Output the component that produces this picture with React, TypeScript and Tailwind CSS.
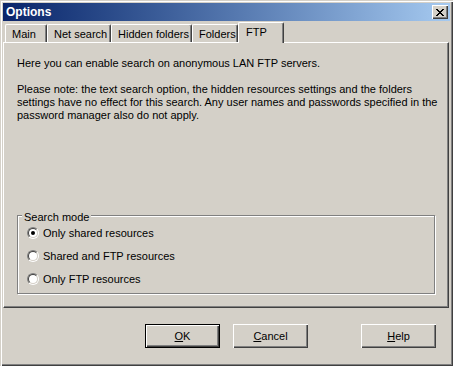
import React from "react";

const tabs = [
  { label: "Main", w: "w-[42px]" },
  { label: "Net search", w: "w-[64px]" },
  { label: "Hidden folders", w: "w-[81px]" },
  { label: "Folders", w: "w-[46px]" },
];

function CloseGlyph() {
  const px: [number, number, number][] = [
    [0, 0, 2], [6, 0, 2],
    [1, 1, 2], [5, 1, 2],
    [2, 2, 4],
    [3, 3, 2],
    [2, 4, 4],
    [1, 5, 2], [5, 5, 2],
    [0, 6, 2], [6, 6, 2],
  ];
  return (
    <svg width="8" height="7" viewBox="0 0 8 7" shapeRendering="crispEdges">
      {px.map(([x, y, w], i) => (
        <rect key={i} x={x} y={y} width={w} height={1} fill="#000" />
      ))}
    </svg>
  );
}

function Radio({ checked, label }: { checked?: boolean; label: string }) {
  return (
    <div className="flex h-[22px] items-center">
      <div className="h-[12px] w-[12px] rounded-full border border-t-[#808080] border-l-[#808080] border-r-white border-b-white">
        <div className="flex h-full w-full items-center justify-center rounded-full border border-t-[#404040] border-l-[#404040] border-r-[#d4d0c8] border-b-[#d4d0c8] bg-white">
          {checked && <div className="h-[4px] w-[4px] rounded-full bg-black" />}
        </div>
      </div>
      <span className="ml-[4px]">{label}</span>
    </div>
  );
}

function Button({ first, rest, isDefault }: { first: string; rest: string; isDefault?: boolean }) {
  return (
    <div
      className={
        isDefault
          ? "flex h-[24px] w-[75px] items-center justify-center border border-black bg-[#d4d0c8] shadow-[inset_1px_1px_0_#ffffff,inset_-1px_-1px_0_#404040,inset_-2px_-2px_0_#808080]"
          : "flex h-[24px] w-[75px] items-center justify-center bg-[#d4d0c8] shadow-[inset_1px_1px_0_#ffffff,inset_-1px_-1px_0_#404040,inset_-2px_-2px_0_#808080]"
      }
    >
      <span>
        <span className="underline underline-offset-[1px]">{first}</span>
        {rest}
      </span>
    </div>
  );
}

export default function App() {
  return (
    <div className="flex h-[366px] w-[453px] flex-col bg-[#d4d0c8] p-[3px] font-['Liberation_Sans',Arial,sans-serif] text-[11px] leading-[13px] text-black shadow-[inset_1px_1px_0_#d4d0c8,inset_2px_2px_0_#ffffff,inset_-1px_-1px_0_#404040,inset_-2px_-2px_0_#808080]">
      {/* title bar */}
      <div className="flex h-[18px] items-center bg-linear-to-r from-[#0a246a] to-[#a6caf0] pl-[3px] pr-[2px]">
        <span className="text-[12px] font-bold text-white">Options</span>
        <div className="ml-auto flex h-[14px] w-[16px] items-center justify-center bg-[#d4d0c8] shadow-[inset_1px_1px_0_#ffffff,inset_-1px_-1px_0_#404040,inset_-2px_-2px_0_#808080]">
          <CloseGlyph />
        </div>
      </div>

      {/* tab strip */}
      <div className="flex h-[21px] items-end pl-[2px]">
        {tabs.map((t) => (
          <div
            key={t.label}
            className={`${t.w} h-[18px] rounded-tl-[2px] rounded-tr-[2px] border-t border-l border-r border-t-white border-l-white border-r-[#404040] pl-[6px] pt-[3px] shadow-[inset_-1px_0_0_#808080]`}
          >
            {t.label}
          </div>
        ))}
        <div className="relative z-10 -mb-[1px] h-[21px] w-[46px] rounded-tl-[2px] rounded-tr-[2px] border-t border-l border-r border-t-white border-l-white border-r-[#404040] bg-[#d4d0c8] pl-[7px] pt-[3px] shadow-[inset_-1px_0_0_#808080]">
          FTP
        </div>
      </div>

      {/* tab panel */}
      <div className="mr-[1px] flex h-[266px] flex-col border border-t-white border-l-white border-r-[#404040] border-b-[#404040] pl-[13px] pt-[14px] shadow-[inset_-1px_-1px_0_#808080]">
        <p>Here you can enable search on anonymous LAN FTP servers.</p>
        <p className="mt-[13px]">
          Please note: the text search option, the hidden resources settings and the folders
          <br />
          settings have no effect for this search. Any user names and passwords specified in the
          <br />
          password manager also do not apply.
        </p>

        <div className="relative mt-auto mb-[13px] h-[79px] w-[418px] border border-[#808080] shadow-[1px_1px_0_#ffffff,inset_1px_1px_0_#ffffff]">
          <span className="absolute -top-[5px] left-[4px] bg-[#d4d0c8] px-[2px]">Search mode</span>
          <div className="flex flex-col gap-[1px] pl-[9px] pt-[6px]">
            <Radio checked label="Only shared resources" />
            <Radio label="Shared and FTP resources" />
            <Radio label="Only FTP resources" />
          </div>
        </div>
      </div>

      {/* buttons */}
      <div className="mt-[16px] flex pr-[14px]">
        <div className="ml-auto">
          <Button isDefault first="O" rest="K" />
        </div>
        <div className="ml-[13px]">
          <Button first="C" rest="ancel" />
        </div>
        <div className="ml-[53px]">
          <Button first="H" rest="elp" />
        </div>
      </div>
    </div>
  );
}
